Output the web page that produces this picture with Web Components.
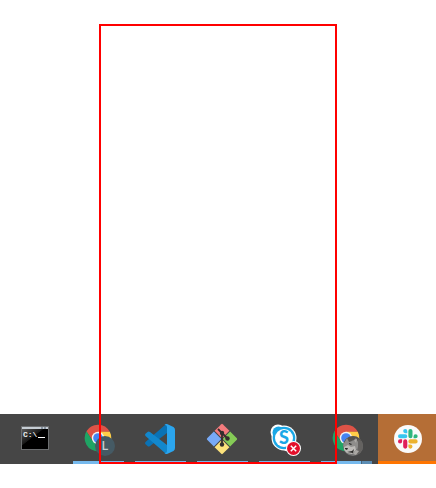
<!DOCTYPE html>
<html lang="en">
<head>
<meta charset="utf-8">
<title>Desktop taskbar</title>
<style>
  html, body { margin: 0; background: #fff; font-family: "Liberation Sans", Arial, sans-serif; }
</style>
</head>
<body>
<desktop-view>
  <task-bar>
    <task-item label="Command Prompt"><icon-terminal></icon-terminal></task-item>
    <task-item label="Chrome, profile L" state="open"><icon-chrome profile="letter"></icon-chrome></task-item>
    <task-item label="Visual Studio Code" state="open"><icon-code></icon-code></task-item>
    <task-item label="Git" state="open"><icon-git></icon-git></task-item>
    <task-item label="Skype" state="open"><icon-skype></icon-skype></task-item>
    <task-item label="Chrome, photo profile" state="stacked"><icon-chrome profile="photo"></icon-chrome></task-item>
    <task-item label="Slack" state="alert"><icon-slack></icon-slack></task-item>
  </task-bar>
</desktop-view>
<script>
const define = (name, html) => customElements.define(name, class extends HTMLElement {
  constructor() {
    super();
    this.attachShadow({ mode: 'open' }).innerHTML = html;
  }
});

const iconStyle = '<style>:host{display:block;width:34px;height:34px}svg{display:block;overflow:visible}</style>';
const icon = body => `${iconStyle}<svg width="34" height="34" viewBox="0 0 34 34" aria-hidden="true">${body}</svg>`;

define('desktop-view', `
  <style>
    :host { display: block; position: relative; padding-top: 414px; }
    .marker { position: absolute; inset: 24px 99px 0; border: 2px solid #f00; pointer-events: none; }
  </style>
  <slot></slot>
  <div class="marker"></div>`);

define('task-bar', `
  <style>
    :host { display: block; overflow: hidden; background: #464646; }
    nav { display: flex; padding-left: 5px; }
  </style>
  <nav aria-label="Taskbar"><slot></slot></nav>`);

customElements.define('task-item', class extends HTMLElement {
  constructor() {
    super();
    this.attachShadow({ mode: 'open' }).innerHTML = `
      <style>
        :host { display: block; flex: 0 0 62px; }
        :host([state="alert"]) { flex: 1 0 60px; margin-left: 1px; background: #b56e36; }
        button { display: grid; grid-template-rows: 47px 3px; justify-items: center; width: 100%;
          margin: 0; padding: 0; border: 0; background: none; font: inherit; color: inherit; }
        .icon { padding-top: 8px; height: 34px; }
        .line { width: 51px; margin-left: 1px; }
        :host([state="open"]) .line { background: #76b9ed; }
        :host([state="stacked"]) .line { background: linear-gradient(90deg, #76b9ed 40px, #48657c 40px 41px, #5c8db4 41px); }
        :host([state="alert"]) .line { width: 100%; margin: 0; background: #ff7500; }
        :host([state="alert"]) button { width: 60px; }
      </style>
      <button type="button"><span class="icon"><slot></slot></span><span class="line"></span></button>`;
  }
  connectedCallback() {
    this.shadowRoot.querySelector('button').setAttribute('aria-label', this.getAttribute('label'));
  }
});

define('icon-terminal', icon(`
  <defs><linearGradient id="g" x1="0" y1="0" x2="1" y2="1">
    <stop offset="0" stop-color="#5a5a5a"/><stop offset=".4" stop-color="#181818"/><stop offset=".42" stop-color="#000"/>
  </linearGradient></defs>
  <rect x="2" y="4" width="28" height="24" fill="#6c6e70"/>
  <rect x="3" y="5" width="26" height="2" fill="#c6cdd4"/>
  <path d="M22 5h2v2h-2zM25 5h2v2h-2z" fill="#8793a0"/>
  <rect x="3" y="7" width="26" height="20" fill="url(#g)"/>
  <text x="4" y="15" font-family="Liberation Mono" font-size="8" font-weight="700" fill="#eee">C:\\</text>
  <path d="M19 15h7v1h-7z" fill="#fff"/>`));

customElements.define('icon-chrome', class extends HTMLElement {
  connectedCallback() {
    if (this.shadowRoot) return;
    const letter = this.getAttribute('profile') === 'letter';
    const badge = letter
      ? `<circle cx="24" cy="24" r="10" fill="#455a64"/>
         <text x="24" y="28" text-anchor="middle" font-family="Roboto" font-size="12" font-weight="500" fill="#c3cdd2">L</text>`
      : `<clipPath id="c"><circle cx="24" cy="24" r="10"/></clipPath>
         <g clip-path="url(#c)">
           <path d="M14 14h20v20H14z" fill="#777"/>
           <path d="M14 14h20v5l-5 1-5-2-4 3-6 1z" fill="#55534f"/>
           <path d="M18 16l2 4 4-1 3-3 3 6-2 5-6 2-6-2-2-4z" fill="#8e8d8b"/>
           <path d="M15 25l4-2 3 2 4-1 1 4-4 4-5-1-3-3z" fill="#bdbbb8"/>
           <path d="M29 17l5 3v8l-4 6-4-2 3-5z" fill="#646260"/>
           <path d="M20 21l3 1-1 1-2-1zM16 26l3 0-1 2-2-1zM18 30l5-1 2-2-1 4z" fill="#292827"/>
           <path d="M25 18l3-1-1 4zM27 28l3 1-3 4-3-1z" fill="#aaa8a5"/>
         </g>`;
    this.attachShadow({ mode: 'open' }).innerHTML = icon(`
      <g transform="translate(17 16)">
        <path d="M-11.6-6.7A13.4 13.4 0 0 1 11.8-6.2L0-6-5.2 3z" fill="#dd5347"/>
        <path d="M11.800-6.2A13.4 13.4 0 0 1 0 13.4L5.2 3 0-6.2z" fill="#ffce48"/>
        <path d="M-11.6-6.7A13.4 13.4 0 0 0 0 13.4L5.2 3-5.2 3z" fill="#1fa464"/>
        <circle r="6.200" fill="#f3f3f3"/><circle r="4.800" fill="#4584f2"/>
      </g>${badge}`);
  }
});

define('icon-code', icon(`
  <path d="M24 2v9L7 24q-1.500 1-2.500 0L2.500 22.200q-1-1 0-2.200L22 3q1-1 2-1z" fill="#0a72b5"/>
  <path d="M24 32v-9L7 10q-1.500-1-2.500 0L2.500 11.800q-1 1 0 2.200L22 31q1 1 2 1z" fill="#1287cc"/>
  <path d="M24 2l6.500 3Q32 6 32 8v18q0 2-1.500 3L24 32q-1.500.2-2.500-1 2.500.3 2.500-2V5q0-2.300-2.500-2 1-1.200 2.500-1z" fill="#2ba5ee"/>`));

define('icon-git', icon(`
  <g transform="translate(17 17) rotate(45)">
    <path d="M-10-11h9.500v10.500H-11V-10q0-1 1-1z" fill="#f47b7d"/>
    <path d="M.5-11H10q1 0 1 1v9.500H.5z" fill="#85cb56"/>
    <path d="M-11 .5h10.500V11H-10q-1 0-1-1z" fill="#78aaf7"/>
    <path d="M.5 .5H11V10q0 1-1 1H.5z" fill="#fce27c"/>
  </g>
  <g stroke="#342e2e" stroke-width="1.800" fill="none"><path d="M13 7l4 4v12M17 11l6 6"/></g>
  <g fill="#342e2e"><circle cx="17" cy="11" r="2.200"/><circle cx="22.500" cy="16.500" r="2.200"/><circle cx="17" cy="22.500" r="2.200"/></g>`));

define('icon-skype', icon(`
  <g fill="#fff"><circle cx="11" cy="10" r="7.500"/><circle cx="21.500" cy="21.500" r="8"/><circle cx="17" cy="16" r="12.500"/></g>
  <g fill="#1aa7e6"><circle cx="17" cy="16" r="11.300"/><circle cx="11.500" cy="10.500" r="6"/><circle cx="22" cy="21" r="6.500"/></g>
  <circle cx="17" cy="16" r="9" fill="#fff"/>
  <text x="17" y="22" text-anchor="middle" font-family="Lato" font-size="18" font-weight="900" fill="#1aa7e6">S</text>
  <circle cx="26.500" cy="26.500" r="7.500" fill="#fff"/><circle cx="26.500" cy="26.500" r="6.500" fill="#e3102b"/>
  <path d="M23.800 23.800l5.400 5.400m0-5.400l-5.400 5.400" stroke="#fff" stroke-width="1.500"/>`));

const slackArm = (angle, color) => `<g transform="rotate(${angle} 12 12)" fill="${color}">
  <path d="M5.040 15.160a2.520 2.520 0 1 1-2.520-2.520h2.520zM6.310 15.160a2.520 2.520 0 0 1 5.040 0v6.310a2.520 2.520 0 0 1-5.040 0z"/></g>`;
define('icon-slack', icon(`
  <circle cx="17" cy="17" r="14" fill="#fafafa"/>
  <g transform="translate(7 7) scale(.82)">
    ${slackArm(0, '#e01e5a')}${slackArm(90, '#36c5f0')}${slackArm(180, '#2eb67d')}${slackArm(270, '#ecb22e')}
  </g>`));
</script>
</body>
</html>
